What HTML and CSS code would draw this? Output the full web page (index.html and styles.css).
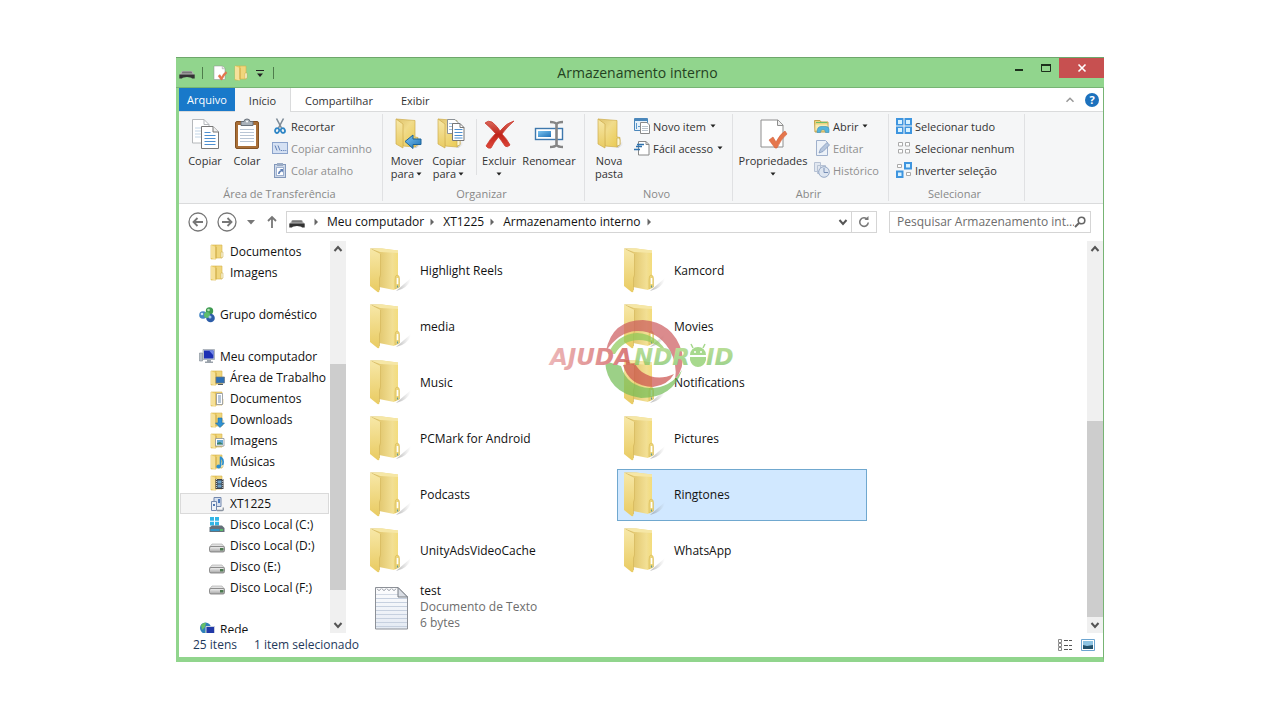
FILE: index.html
```html
<!DOCTYPE html>
<html lang="pt-BR">
<head>
<meta charset="utf-8">
<title>Armazenamento interno</title>
<link rel="stylesheet" href="styles.css">
</head>
<body>
<svg class="defs" width="0" height="0" aria-hidden="true">
  <defs>
    <linearGradient id="gFront" x1="0" y1="0" x2="0" y2="1"><stop offset="0" stop-color="#f7e8a8"/><stop offset="1" stop-color="#e9cb62"/></linearGradient>
    <linearGradient id="gBack" x1="0" y1="0" x2="1" y2="1"><stop offset="0" stop-color="#dcc06a"/><stop offset=".4" stop-color="#f1dc8c"/><stop offset="1" stop-color="#e9c84a"/></linearGradient>
    <linearGradient id="gInner" x1="0" y1="0" x2="1" y2="0"><stop offset="0" stop-color="#c9ac57"/><stop offset=".35" stop-color="#e3c971"/><stop offset=".8" stop-color="#f2df94"/><stop offset="1" stop-color="#f3dc7c"/></linearGradient>
    <linearGradient id="gShade" x1="0" y1="0" x2="1" y2="0"><stop offset="0" stop-color="#777" stop-opacity=".55"/><stop offset="1" stop-color="#999" stop-opacity="0"/></linearGradient>
    <linearGradient id="gBlue" x1="0" y1="0" x2="1" y2="1"><stop offset="0" stop-color="#7cc4f0"/><stop offset="1" stop-color="#1f72b8"/></linearGradient>
    <linearGradient id="gRed" x1="0" y1="0" x2="0" y2="1"><stop offset="0" stop-color="#d9695c"/><stop offset=".5" stop-color="#c0241a"/><stop offset="1" stop-color="#e0493c"/></linearGradient>
    <linearGradient id="gSheet" x1="0" y1="0" x2="0" y2="1"><stop offset="0" stop-color="#fdfdfe"/><stop offset="1" stop-color="#e4eaf3"/></linearGradient>
    <linearGradient id="gDisk" x1="0" y1="0" x2="0" y2="1"><stop offset="0" stop-color="#f2f2f2"/><stop offset="1" stop-color="#a5a5a5"/></linearGradient>
    <linearGradient id="gMarkRed" x1="0" y1="0" x2="1" y2="0"><stop offset="0" stop-color="#e59a9c"/><stop offset="1" stop-color="#c9403f"/></linearGradient>
    <linearGradient id="gMarkGreen" x1="0" y1="0" x2="0" y2="1"><stop offset="0" stop-color="#a3d36c"/><stop offset="1" stop-color="#6fbd5a"/></linearGradient>
  </defs>

  <symbol id="folder-lg" viewBox="0 0 48 48">
    <path d="M30 44 L45 31 Q44 38 36 42 Z" fill="url(#gShade)"/>
    <path d="M4 1.500 L16 1.500 L32 3.500 V40 L28 43 L13 40 L13 8 Z" fill="url(#gInner)"/>
    <path d="M4 1.500 L16 1.500 L32 3.500 V6 L14 5 Z" fill="#f6e7a6"/>
    <path d="M29 33 q0-5 2-5 q2.500 0 2.500 4 v8 l-4.500 2z" fill="#ecd47a" stroke="#d8bb55" stroke-width=".6"/>
    <path d="M31.500 31v6" stroke="#fff" stroke-width="1.600"/><path d="M31.500 38.500v2" stroke="#5b9c9c" stroke-width="1.200"/>
    <path d="M4 1.500 L14.500 7 V28 L13.500 31 V43 Q13.500 46 11.500 45 L4 39 Z" fill="url(#gFront)"/>
    <path d="M14.500 7 V28 L13.500 31 V43" fill="none" stroke="#d4b65a" stroke-width=".7"/>
  </symbol>
  <symbol id="folder-md" viewBox="0 0 32 32">
    <path d="M23 29 L30 23 V27 L25 30 Z" fill="url(#gShade)"/>
    <path d="M5 1 L24 2.500 V19 L27 19.500 V26 L24 29 L12 28 L11 6 Z" fill="url(#gBack)" stroke="#cfae4d" stroke-width=".7"/>
    <path d="M24 20 q3-1 3 2 v5 l-3 1z" fill="#fdf7d5" stroke="#c9ae55" stroke-width=".7"/>
    <path d="M5 1 L12 6 V30 L5 26 Z" fill="url(#gFront)" stroke="#cfae4d" stroke-width=".7"/>
  </symbol>
  <symbol id="folder-sm" viewBox="0 0 16 16">
    <path d="M2 1 H7 V15 H2 Z" fill="#eed06d" stroke="#d9b64c" stroke-width=".6"/>
    <path d="M7 1 H13 V14 H7 Z" fill="#f0d67c" stroke="#d6b34a" stroke-width=".6"/>
    <path d="M2 1 L6.500 3 V15.500 L2 14 Z" fill="#f6e19a"/>
    <path d="M7 3v11" stroke="#c9a541" stroke-width=".8"/>
    <path d="M12 8 h2 v5 l-2 1z" fill="#fdf6d8" stroke="#c5a94f" stroke-width=".5"/>
  </symbol>
  <symbol id="phone" viewBox="0 0 16 16">
    <path d="M3 6 H13 L15.500 10 H.500 Z" fill="#b5b5b5"/><path d="M3.500 6.500 h9 l1 2 h-11z" fill="#777"/>
    <path d="M.300 9.500 H15.700 V13.500 H13 Q12 12 8 12 T3 13.500 H.300 Z" fill="#333"/>
  </symbol>
  <symbol id="properties" viewBox="0 0 32 32">
    <path d="M4 2 H21 L26 7 V29 H4 Z" fill="#fff" stroke="#8e8e8e"/><path d="M20.500 2 V7.500 H26" fill="#eee" stroke="#8e8e8e"/>
    <path d="M12 22 L16 19 L19 24 Q23 16 28 13 L30 16 Q24 21 20 30 L18 30 Z" fill="#e5764c" stroke="#d2603a" stroke-width=".6"/>
  </symbol>
  <symbol id="copy" viewBox="0 0 32 32">
    <g fill="#fff" stroke="#b5b8bb"><path d="M3.500 1.500 H15 L20 6.500 V25 H3.500 Z"/><path d="M15 1.500 V6.500 H20" fill="none"/></g>
    <path d="M6 10h6M6 13h6M6 16h6M6 19h6" stroke="#c2d5e6"/>
    <path d="M12.500 8.500 H24 L29.500 14 V30.500 H12.500 Z" fill="#fff" stroke="#777"/><path d="M24 8.500 V14 H29.500" fill="#eee" stroke="#777"/>
    <path d="M15.500 14.500h6M15.500 17.500h11M15.500 20.500h11M15.500 23.500h11M15.500 26.500h11" stroke="#4d8fd0"/>
  </symbol>
  <symbol id="paste" viewBox="0 0 32 32">
    <rect x="4.500" y="3.500" width="23" height="27" rx="1.500" fill="#a96f37" stroke="#825224"/><path d="M7 7h18v21H7z" fill="#fff"/>
    <path d="M9 11.500h14M9 14.500h14M9 17.500h14M9 20.500h14M9 23.500h14" stroke="#b9c6d5"/>
    <path d="M10 3.500 h3 q0-2.500 3-2.500 t3 2.500 h3 v4 H10z" fill="#aab2ba" stroke="#69717a"/><circle cx="16" cy="3.500" r="1" fill="#fff"/>
  </symbol>
  <symbol id="cut" viewBox="0 0 16 16">
    <path d="M4.500 .500 L9.500 10M11.500 .500 L6.500 10" stroke="#7e8b97" stroke-width="1.600"/>
    <g fill="none" stroke="#2f86c6" stroke-width="1.800"><ellipse cx="5.300" cy="12.500" rx="2" ry="2.400" transform="rotate(20 5 12)"/><ellipse cx="10.700" cy="12.500" rx="2" ry="2.400" transform="rotate(-20 11 12)"/></g>
  </symbol>
  <symbol id="path" viewBox="0 0 16 16">
    <rect x=".500" y="2.500" width="15" height="11" fill="#d5e1f3" stroke="#8ba3cb"/><path d="M3 5.500l2 5M6 5.500l2 5" stroke="#5f7fb5"/><path d="M9 10.500h1.200M11.200 10.500h1.200M13.300 10.500h1" stroke="#5f7fb5"/>
  </symbol>
  <symbol id="shortcut" viewBox="0 0 16 16">
    <rect x="2.500" y="2.500" width="11" height="13" fill="#cdd8e8" stroke="#8298bb"/><rect x="5" y="1" width="6" height="3" fill="#9aabc5"/><rect x="4.500" y="5.500" width="7" height="8" fill="#fff" stroke="#9eb1d0"/>
    <path d="M6 12 q0-3 3-4 l-1.500-1 h3.500 v3.500 l-1-1.200 q-2 .7-2.500 2.700z" fill="#6080b5"/>
  </symbol>
  <symbol id="move-to" viewBox="0 0 32 32">
    <use href="#folder-md"/><path d="M14 23.500 L22 17 V21 H30 V26.500 H22 V30.500 Z" fill="url(#gBlue)" stroke="#1c6399"/>
  </symbol>
  <symbol id="copy-to" viewBox="0 0 32 32">
    <use href="#folder-md"/>
    <path d="M14.500 1.500 H22 L25 4.500 V15.500 H14.500Z" fill="#fff" stroke="#8d9297"/><path d="M16 5.500h6M16 8.500h5M16 11.500h5" stroke="#9fbddb"/>
    <path d="M19.500 5.500 H27 L31 9.500 V22.500 H19.500Z" fill="#fff" stroke="#777"/><path d="M27 5.500V9.500H31" fill="none" stroke="#777"/><path d="M21.500 11.500h8M21.500 14.500h8M21.500 17.500h8M21.500 20h8" stroke="#4d8fd0"/>
  </symbol>
  <symbol id="delete" viewBox="0 0 32 32">
    <path d="M2 5 Q5 2 9 4 Q15 9 17 13 Q23 5 31 3 Q23 10 19 16 Q24 21 27 27 Q24 30 22 28 Q18 22 15.500 19 Q11 24 8 30 Q5 31 3 28 Q7 21 12.500 15.500 Q8 10 2 5Z" fill="url(#gRed)" stroke="#cb3a2e" stroke-width=".8"/>
  </symbol>
  <symbol id="rename" viewBox="0 0 32 32">
    <rect x="2.500" y="10.500" width="27" height="11" fill="#fff" stroke="#3e78ad" stroke-width="1.400"/><rect x="5" y="13" width="13" height="6" fill="url(#gBlue)"/>
    <path d="M17 4 Q22 4 23.500 6 Q25 4 30 4M23.500 6V27M17 29 Q22 29 23.500 27 Q25 29 30 29" fill="none" stroke="#858585" stroke-width="2.600"/>
  </symbol>
  <symbol id="new-item" viewBox="0 0 16 16">
    <path d="M.500 .500h13v12H.500z" fill="#e7f1fa" stroke="#4b87bb"/><path d="M1 2h12" stroke="#4b87bb" stroke-width="2"/><path d="M2.500 5v6M4 8.500h2" stroke="#5d9acb"/>
    <path d="M6.500 4.500H13l2.500 2.500V15.500H6.500Z" fill="#fff" stroke="#8a8a8a"/><path d="M8 8.500h6M8 10.500h6M8 12.500h6" stroke="#b9c3cc"/>
  </symbol>
  <symbol id="easy" viewBox="0 0 16 16">
    <path d="M4.500 1.500H12l3 3V15H4.500Z" fill="#fff" stroke="#888"/><path d="M12 1.500v3h3" fill="none" stroke="#888"/><path d="M3 4.500h7M2 6.500h6M0 9.500h6" stroke="#2f72ad" stroke-width="1.300"/>
  </symbol>
  <symbol id="open" viewBox="0 0 16 16">
    <path d="M.500 2.500H6l1 1.500h7v10H1Z" fill="#ecd481" stroke="#c3a24a"/><path d="M2 4.500h11" stroke="#6ebf6a"/><path d="M1.500 6.500h12v3l-12 3z" fill="#f8ecb4"/><path d="M3 14.500 q0-6 4-6 h5 q3 0 3 3 v3 H11.500 q0-3-2.500-3 t-2.500 3Z" fill="#54b4dc" stroke="#3a8fb8" stroke-width=".6"/>
  </symbol>
  <symbol id="edit" viewBox="0 0 16 16">
    <path d="M2.500 .500h9l2 2v13h-11z" fill="#edf2f8" stroke="#9fb0cc"/><path d="M5 13l1.500-4L13 2.500l2.500 2.500L9 11.500Z" fill="#b6c6dd" stroke="#8399bd" stroke-width=".8"/>
  </symbol>
  <symbol id="history" viewBox="0 0 16 16">
    <path d="M.500 .500h6v9h-6zM3.500 3.500h8v8h-8z" fill="#e1e7f0" stroke="#b7c2d4"/><circle cx="10" cy="10" r="5.300" fill="#dde5f0" stroke="#96a9c6"/><path d="M10 6v4.500h4" fill="none" stroke="#788fb5"/>
  </symbol>
  <symbol id="sel-all" viewBox="0 0 16 16">
    <path d="M0 0h7.500v7.500H0zM8.500 0H16v7.500H8.500zM0 8.500h7.500V16H0zM8.500 8.500H16V16H8.500z" fill="#3e95df"/><path d="M2 2h4v4H2zM10 2h4v4h-4zM2 10h4v4H2zM10 10h4v4h-4z" fill="#d8f2ff"/>
  </symbol>
  <symbol id="sel-none" viewBox="0 0 16 16">
    <path d="M2.500 2.500h4v3.500h-4zM9.500 2.500h4v3.500h-4zM2.500 9.500h4v3.500h-4zM9.500 9.500h4v3.500h-4z" fill="#fff" stroke="#aaa"/>
  </symbol>
  <symbol id="sel-inv" viewBox="0 0 16 16">
    <path d="M1.500 2.500h4v3h-4zM10.500 10.500h4v3h-4z" fill="#fff" stroke="#aaa"/><path d="M8 0h8v7.500H8zM0 8.500h7.500V16H0z" fill="#3e95df"/><path d="M10 2h4v3.500h-4zM2 10.500h3.500V14H2z" fill="#d8f2ff"/>
  </symbol>
  <symbol id="homegroup" viewBox="0 0 16 16">
    <circle cx="10.500" cy="4" r="3.700" fill="#3e9a51"/><circle cx="4" cy="8" r="3.800" fill="#4586c4"/><circle cx="11.500" cy="11" r="4.300" fill="#2d5da8"/><circle cx="8" cy="8" r="3" fill="#5ebd6c"/><circle cx="9.500" cy="3" r="1.300" fill="#b5e5b5"/><circle cx="3" cy="7" r="1.300" fill="#cfe5f8"/><circle cx="11" cy="10" r="1.500" fill="#9fc5ee"/>
  </symbol>
  <symbol id="computer" viewBox="0 0 16 16">
    <path d="M.500 4h3v8h-3z" fill="#b9c1c9" stroke="#7f8a94" stroke-width=".6"/><path d="M4 .500h11.500v10H4z" fill="#ccd2da" stroke="#8b94a0" stroke-width=".6"/><path d="M5 1.500h9.500v8H5z" fill="#1d2fb4"/><path d="M10 1.500h4.500v5z" fill="#7186e6"/><path d="M8 11h4v1.500h2V14H6v-1.500h2z" fill="#9aa2ab"/>
  </symbol>
  <symbol id="f-desktop" viewBox="0 0 16 16"><use href="#folder-sm"/><path d="M7 7h8.500v6H7z" fill="#2d6fb4" stroke="#69747f" stroke-width=".7"/><path d="M9 14.500h5" stroke="#4c5a66"/></symbol>
  <symbol id="f-docs" viewBox="0 0 16 16"><use href="#folder-sm"/><path d="M7.500 2.500h6v11h-6z" fill="#fff" stroke="#8d9299" stroke-width=".8"/><path d="M9 5h3M9 7h3M9 9h3M9 11h3" stroke="#6d8bad"/></symbol>
  <symbol id="f-down" viewBox="0 0 16 16"><use href="#folder-sm"/><path d="M9 6h4v5h2.500L11 15.500 6.500 11H9z" fill="#2f91d3" stroke="#1d6da5" stroke-width=".6"/></symbol>
  <symbol id="f-pics" viewBox="0 0 16 16"><use href="#folder-sm"/><path d="M6.500 5.500h8.500v7.500H6.500z" fill="#fff" stroke="#8d9299" stroke-width=".8"/><path d="M8 7h6v4.500H8z" fill="#66a9d3"/><path d="M8 10l3-1 3 2v.500H8z" fill="#3c7f66"/></symbol>
  <symbol id="f-music" viewBox="0 0 16 16"><use href="#folder-sm"/><path d="M11.500 2.500 V12 M11.500 3 q4 3 2 8" fill="none" stroke="#2b8fd0" stroke-width="1.600"/><ellipse cx="9.700" cy="12.500" rx="2.300" ry="1.900" fill="#2b8fd0"/></symbol>
  <symbol id="f-video" viewBox="0 0 16 16"><use href="#folder-sm"/><path d="M6.500 4h8v10h-8z" fill="#3d434b"/><path d="M8.500 5.500h4v3h-4zM8.500 9.500h4v3h-4z" fill="#6aa0c8"/><path d="M7.500 4v10M13.700 4v10" stroke="#eee" stroke-width=".8" stroke-dasharray="1 1"/></symbol>
  <symbol id="device" viewBox="0 0 16 16"><path d="M5 1.500h7v9H5z" fill="#d8e1ef" stroke="#7489ae"/><path d="M2.500 5.500h5v9h-5z" fill="#eef2f8" stroke="#7489ae"/><path d="M9 3h2v4H9z" fill="#4c79bf"/><path d="M4 8h2v2H4z" fill="#5177b1"/><path d="M8 14.500h5q2 0 1-3" fill="none" stroke="#8a93a0" stroke-width="1.300"/></symbol>
  <symbol id="disk" viewBox="0 0 16 16"><path d="M3 6h10l2.500 3H.500z" fill="#e2e2e2" stroke="#a5a5a5" stroke-width=".6"/><rect x=".500" y="8.500" width="15" height="5.500" rx="1.500" fill="url(#gDisk)" stroke="#777" stroke-width=".8"/><path d="M11 10h3.500v2.500H11z" fill="#4c7a50"/></symbol>
  <symbol id="disk-c" viewBox="0 0 16 16"><path d="M1 0h4v3.800H1zM6 0h4v3.800H6zM1 4.800h4v3.800H1zM6 4.800h4v3.800H6z" fill="#31b5e6"/><path d="M1 10l2-1.500h10L15.500 11v4H.500V10z" fill="#65707a"/><path d="M1.500 12h9v2h-9z" fill="#2e93c4"/><path d="M11 12h3v2h-3z" fill="#58b96b"/></symbol>
  <symbol id="network" viewBox="0 0 16 16"><circle cx="6.500" cy="6" r="5.500" fill="#2f80b9"/><path d="M2 3q3-3 5-2l-1 4-3 3zM6 9l4-2v3l-3 2z" fill="#67bf67"/><path d="M7 4.500h8.500v8H7z" fill="#2139a8" stroke="#c9d0de"/><path d="M9 15.500h5" stroke="#8d95a0"/></symbol>
  <symbol id="text-file" viewBox="0 0 48 48">
    <path d="M9.500 4.500H32L41.500 14V46H9.500Z" fill="url(#gSheet)" stroke="#8c9097"/>
    <path d="M10 15.500h31M10 19.500h31M10 23.500h31M10 27.500h31M10 31.500h31M10 35.500h31M10 39.500h31M10 43.500h31" stroke="#c6d0df"/>
    <path d="M10 11.500h22" stroke="#d3dae5"/><path d="M11 5.500q2 4 4 0M16 5.500q2 4 4 0M21 5.500q2 4 4 0M26 5.500q2 4 4 0" fill="none" stroke="#a4a9b1"/>
    <path d="M32 4.500V14H41.500Z" fill="#d9dde4" stroke="#777c84"/>
  </symbol>
  <symbol id="up" viewBox="0 0 16 16"><path d="M4.500 10L8 6l3.500 4" fill="none" stroke="#555" stroke-width="2"/></symbol>
  <symbol id="down" viewBox="0 0 16 16"><path d="M4.500 6L8 10l3.500-4" fill="none" stroke="#555" stroke-width="2"/></symbol>
  <symbol id="tri" viewBox="0 0 8 8"><path d="M2.500 .500L6 4L2.500 7.500Z" fill="#666"/></symbol>
  <symbol id="caret" viewBox="0 0 8 8"><path d="M1.500 2.500h5L4 5.500Z" fill="#222"/></symbol>
</svg>

<main class="window">
  <header class="titlebar">
    <div class="quick">
      <svg class="i16"><use href="#phone"/></svg><i class="qsep"></i>
      <button class="plain" aria-label="Propriedades"><svg class="i16"><use href="#properties"/></svg></button>
      <button class="plain" aria-label="Nova pasta"><svg class="i16"><use href="#folder-sm"/></svg></button>
      <button class="plain custom" aria-label="Personalizar"><svg width="8" height="8" viewBox="0 0 8 8"><path d="M0 1.500h8" stroke="#222"/><path d="M1 4.500h6L4 8Z" fill="#222"/></svg></button><i class="qsep"></i>
    </div>
    <h1>Armazenamento interno</h1>
    <div class="controls">
      <button class="ctl" aria-label="Minimizar"><svg width="10" height="10" viewBox="0 0 10 10"><path d="M1 7h8" stroke="#1d301c" stroke-width="2"/></svg></button>
      <button class="ctl" aria-label="Maximizar"><svg width="10" height="10" viewBox="0 0 10 10"><path d="M.500 2v6.500h9V2" fill="none" stroke="#1d301c"/><path d="M0 2h10" stroke="#1d301c" stroke-width="2"/></svg></button>
      <button class="ctl close" aria-label="Fechar"><svg width="10" height="10" viewBox="0 0 10 10"><path d="M1.500 1.500l7 7M8.500 1.500l-7 7" stroke="#fff" stroke-width="1.600"/></svg></button>
    </div>
  </header>

  <nav class="tabs">
    <button class="tab file">Arquivo</button><button class="tab active">Início</button><button class="tab">Compartilhar</button><button class="tab">Exibir</button>
    <div class="tabs-end">
      <button class="plain" aria-label="Recolher faixa"><svg width="14" height="14" viewBox="0 0 16 16"><path d="M4 10l4-4 4 4" fill="none" stroke="#999" stroke-width="1.800"/></svg></button>
      <button class="help" aria-label="Ajuda">?</button>
    </div>
  </nav>

  <section class="ribbon">
    <div class="group g-clip">
      <div class="tools">
        <button class="big w42"><svg class="i32"><use href="#copy"/></svg>Copiar</button>
        <button class="big w42"><svg class="i32"><use href="#paste"/></svg>Colar</button>
        <div class="stack">
          <button class="small"><svg class="i16"><use href="#cut"/></svg>Recortar</button>
          <button class="small" disabled><svg class="i16"><use href="#path"/></svg>Copiar caminho</button>
          <button class="small" disabled><svg class="i16"><use href="#shortcut"/></svg>Colar atalho</button>
        </div>
      </div>
      <h2>Área de Transferência</h2>
    </div>
    <div class="group g-org">
      <div class="tools">
        <button class="big w42"><svg class="i32"><use href="#move-to"/></svg>Mover<span>para<svg class="i8"><use href="#caret"/></svg></span></button>
        <button class="big w42"><svg class="i32"><use href="#copy-to"/></svg>Copiar<span>para<svg class="i8"><use href="#caret"/></svg></span></button>
        <i class="inner"></i>
        <button class="big w42"><svg class="i32"><use href="#delete"/></svg>Excluir<span><svg class="i8"><use href="#caret"/></svg></span></button>
        <button class="big w58"><svg class="i32"><use href="#rename"/></svg>Renomear</button>
      </div>
      <h2>Organizar</h2>
    </div>
    <div class="group g-new">
      <div class="tools">
        <button class="big w42"><svg class="i32"><use href="#folder-md"/></svg>Nova<span>pasta</span></button>
        <div class="stack">
          <button class="small"><svg class="i16"><use href="#new-item"/></svg>Novo item<svg class="i8"><use href="#caret"/></svg></button>
          <button class="small"><svg class="i16"><use href="#easy"/></svg>Fácil acesso<svg class="i8"><use href="#caret"/></svg></button>
        </div>
      </div>
      <h2>Novo</h2>
    </div>
    <div class="group g-open">
      <div class="tools">
        <button class="big w74"><svg class="i32"><use href="#properties"/></svg>Propriedades<span><svg class="i8"><use href="#caret"/></svg></span></button>
        <div class="stack">
          <button class="small"><svg class="i16"><use href="#open"/></svg>Abrir<svg class="i8"><use href="#caret"/></svg></button>
          <button class="small" disabled><svg class="i16"><use href="#edit"/></svg>Editar</button>
          <button class="small" disabled><svg class="i16"><use href="#history"/></svg>Histórico</button>
        </div>
      </div>
      <h2>Abrir</h2>
    </div>
    <div class="group g-sel">
      <div class="tools">
        <div class="stack">
          <button class="small"><svg class="i16"><use href="#sel-all"/></svg>Selecionar tudo</button>
          <button class="small"><svg class="i16"><use href="#sel-none"/></svg>Selecionar nenhum</button>
          <button class="small"><svg class="i16"><use href="#sel-inv"/></svg>Inverter seleção</button>
        </div>
      </div>
      <h2>Selecionar</h2>
    </div>
  </section>

  <section class="location">
    <button class="plain" aria-label="Voltar"><svg width="20" height="20" viewBox="0 0 20 20" fill="none" stroke="#777"><circle cx="10" cy="10" r="9" stroke-width="1.300"/><path d="M15 10H6M9.500 6L5.500 10l4 4" stroke-width="1.800"/></svg></button>
    <button class="plain" aria-label="Avançar"><svg width="20" height="20" viewBox="0 0 20 20" fill="none" stroke="#777"><circle cx="10" cy="10" r="9" stroke-width="1.300"/><path d="M5 10h9M10.500 6l4 4-4 4" stroke-width="1.800"/></svg></button>
    <button class="plain" aria-label="Recentes"><svg width="10" height="8" viewBox="0 0 10 8"><path d="M1 2h8L5 6.500Z" fill="#777"/></svg></button>
    <button class="plain" aria-label="Acima"><svg width="14" height="16" viewBox="0 0 14 16"><path d="M7 14V3M3 7l4-4 4 4" fill="none" stroke="#777" stroke-width="1.800"/></svg></button>
    <div class="address">
      <svg class="i16"><use href="#phone"/></svg><svg class="i8"><use href="#tri"/></svg>
      <a href="#">Meu computador</a><svg class="i8"><use href="#tri"/></svg>
      <a href="#">XT1225</a><svg class="i8"><use href="#tri"/></svg>
      <a href="#">Armazenamento interno</a><svg class="i8"><use href="#tri"/></svg>
      <button class="plain drop" aria-label="Histórico de endereços"><svg class="i16"><use href="#down"/></svg></button>
      <button class="plain reload" aria-label="Atualizar"><svg class="i16" viewBox="0 0 16 16"><path d="M11.500 5.500A4.300 4.300 0 1 0 12.300 8.500" fill="none" stroke="#777" stroke-width="1.600"/><path d="M8.500 6h4V2Z" fill="#777"/></svg></button>
    </div>
    <div class="search">
      <input type="text" aria-label="Pesquisar" placeholder="Pesquisar Armazenamento int...">
      <svg width="12" height="12" viewBox="0 0 12 12" fill="none" stroke="#666"><circle cx="7.500" cy="4.500" r="3.300" stroke-width="1.600"/><path d="M5 7L1 11" stroke-width="2"/></svg>
    </div>
  </section>

  <section class="body">
    <div class="tree-pane">
      <nav class="tree">
        <a href="#" class="node sub"><svg class="i16"><use href="#folder-sm"/></svg>Documentos</a>
        <a href="#" class="node sub last"><svg class="i16"><use href="#folder-sm"/></svg>Imagens</a>
        <a href="#" class="node last"><svg class="i16"><use href="#homegroup"/></svg>Grupo doméstico</a>
        <a href="#" class="node"><svg class="i16"><use href="#computer"/></svg>Meu computador</a>
        <a href="#" class="node sub"><svg class="i16"><use href="#f-desktop"/></svg>Área de Trabalho</a>
        <a href="#" class="node sub"><svg class="i16"><use href="#f-docs"/></svg>Documentos</a>
        <a href="#" class="node sub"><svg class="i16"><use href="#f-down"/></svg>Downloads</a>
        <a href="#" class="node sub"><svg class="i16"><use href="#f-pics"/></svg>Imagens</a>
        <a href="#" class="node sub"><svg class="i16"><use href="#f-music"/></svg>Músicas</a>
        <a href="#" class="node sub"><svg class="i16"><use href="#f-video"/></svg>Vídeos</a>
        <a href="#" class="node sub current"><svg class="i16"><use href="#device"/></svg>XT1225</a>
        <a href="#" class="node sub"><svg class="i16"><use href="#disk-c"/></svg>Disco Local (C:)</a>
        <a href="#" class="node sub"><svg class="i16"><use href="#disk"/></svg>Disco Local (D:)</a>
        <a href="#" class="node sub"><svg class="i16"><use href="#disk"/></svg>Disco (E:)</a>
        <a href="#" class="node sub last"><svg class="i16"><use href="#disk"/></svg>Disco Local (F:)</a>
        <a href="#" class="node"><svg class="i16"><use href="#network"/></svg>Rede</a>
      </nav>
      <div class="scroll tree-scroll"><svg class="i16"><use href="#up"/></svg><i class="before"></i><i class="thumb"></i><i class="after"></i><svg class="i16"><use href="#down"/></svg></div>
    </div>
    <div class="files">
      <a href="#" class="item"><svg class="i48"><use href="#folder-lg"/></svg><span>Highlight Reels</span></a>
      <a href="#" class="item"><svg class="i48"><use href="#folder-lg"/></svg><span>Kamcord</span></a>
      <a href="#" class="item"><svg class="i48"><use href="#folder-lg"/></svg><span>media</span></a>
      <a href="#" class="item"><svg class="i48"><use href="#folder-lg"/></svg><span>Movies</span></a>
      <a href="#" class="item"><svg class="i48"><use href="#folder-lg"/></svg><span>Music</span></a>
      <a href="#" class="item"><svg class="i48"><use href="#folder-lg"/></svg><span>Notifications</span></a>
      <a href="#" class="item"><svg class="i48"><use href="#folder-lg"/></svg><span>PCMark for Android</span></a>
      <a href="#" class="item"><svg class="i48"><use href="#folder-lg"/></svg><span>Pictures</span></a>
      <a href="#" class="item"><svg class="i48"><use href="#folder-lg"/></svg><span>Podcasts</span></a>
      <a href="#" class="item selected"><svg class="i48"><use href="#folder-lg"/></svg><span>Ringtones</span></a>
      <a href="#" class="item"><svg class="i48"><use href="#folder-lg"/></svg><span>UnityAdsVideoCache</span></a>
      <a href="#" class="item"><svg class="i48"><use href="#folder-lg"/></svg><span>WhatsApp</span></a>
      <a href="#" class="item"><svg class="i48"><use href="#text-file"/></svg><span>test<small>Documento de Texto</small><small>6 bytes</small></span></a>
      <svg class="mark" width="190" height="82" viewBox="0 0 190 82">
        <path d="M59 33 Q65 2 96 2 Q126 4 135 34 Q138 50 128 62 Q131 46 122 31 Q110 12 89 13 Q72 14 59 33Z" fill="#cc5b5e"/>
        <path d="M61 36 Q70 16 90 15 Q111 16 122 38 Q108 22 92 22 Q76 22 68 36 Z" fill="#8cc958"/>
        <path d="M58 43 Q60 75 94 80 Q126 80 135 52 Q124 70 103 70 Q80 69 74 48 Z" fill="#73bd55"/>
        <path d="M76 47 Q82 68 106 69 Q121 67 127 56 Q110 64 95 54 Q89 49 88 45Z" fill="#cb4f4b"/>
        <g class="mark-text">
          <text x="3" y="47" fill="url(#gMarkRed)">AJUDA</text>
          <text x="87" y="47" fill="url(#gMarkGreen)">NDR</text>
          <text x="159" y="47" fill="url(#gMarkGreen)">ID</text>
        </g>
        <path d="M143 37 a8 8 0 0 1 16 0z M143 39h16 v3 q-2 7-8 7 t-8-7z" fill="#82c95d"/><path d="M146 30l-2-4M156 30l2-4" stroke="#82c95d" stroke-width="1.500"/><circle cx="148" cy="34" r="1" fill="#fff"/><circle cx="154" cy="34" r="1" fill="#fff"/>
      </svg>
    </div>
    <div class="scroll file-scroll"><svg class="i16"><use href="#up"/></svg><i class="before"></i><i class="thumb"></i><svg class="i16"><use href="#down"/></svg></div>
  </section>

  <footer class="status">
    <span>25 itens</span><span>1 item selecionado</span>
    <div class="views">
      <button class="plain" aria-label="Detalhes"><svg class="i16" viewBox="0 0 16 16"><path d="M1.500 2.500h3v3h-3zM1.500 6.500h3v3h-3zM1.500 10.500h3v3h-3z" fill="#fff" stroke="#888"/><path d="M7 3.500h4M12 3.500h3M7 8.500h4M12 8.500h3M7 12.500h4M12 12.500h3" stroke="#555"/></svg></button>
      <button class="plain" aria-label="Ícones"><svg class="i16" viewBox="0 0 16 16"><path d="M1.500 2.500h13v11h-13z" fill="#fff" stroke="#6da5d0"/><path d="M3 4h10v8H3z" fill="#8cc3e2"/><path d="M3 8l4 1 6-1v4H3z" fill="#22516b"/></svg></button>
    </div>
  </footer>
</main>
</body>
</html>
```

FILE: styles.css
```css
* { box-sizing: border-box; }
body {
  margin: 0;
  height: 100vh;
  padding: 57px 176px 58px;
  background: #fff;
  display: flex;
  font: 12px/16px "Open Sans", "Noto Sans", sans-serif;
  color: #111;
}
.defs { position: absolute; }
button { font: inherit; color: inherit; background: none; border: 0; padding: 0; }
a { color: inherit; text-decoration: none; }
h1, h2 { margin: 0; font-weight: 400; }
svg { flex: none; display: block; }
.i8 { width: 8px; height: 8px; }
.i16 { width: 16px; height: 16px; }
.i32 { width: 32px; height: 32px; }
.i48 { width: 48px; height: 48px; }
.plain { display: flex; align-items: center; justify-content: center; }

.window {
  flex: 1;
  min-width: 0;
  display: flex;
  flex-direction: column;
  background: #fff;
  border: solid #91d58d;
  border-width: 0 1px 5px 3px;
  border-right-color: #77b474;
}

.titlebar {
  height: 31px;
  flex: none;
  margin: 0 -1px 0 -3px;
  background: #91d58d;
  border-top: 1px solid #6ea76b;
  border-bottom: 1px solid #77b474;
  display: grid;
  grid-template-columns: 1fr auto 1fr;
}
.titlebar h1 { font-size: 14px; line-height: 29px; padding-right: 5px; color: #24421f; }
.quick { display: flex; align-items: center; gap: 5px; padding-left: 3px; }
.qsep { width: 1px; height: 12px; background: #4f7d4c; margin: 0 4px 0 2px; }
.custom { width: 12px; }
.controls { display: flex; justify-content: flex-end; }
.ctl { width: 27px; height: 20px; display: flex; align-items: center; justify-content: center; }
.close { width: 45px; background: #c75050; }

.tabs { height: 24px; flex: none; display: flex; font-size: 11px; border-bottom: 1px solid #dadbdc; color: #333; }
.tab { height: 24px; min-width: 56px; padding: 1px 14px 0; }
.file { background: #1979ca; color: #fff; padding: 0; height: 23px; }
.active { background: #f5f6f7; border-right: 1px solid #dadbdc; padding: 1px 0 0; }
.tabs-end { margin-left: auto; display: flex; align-items: center; gap: 8px; padding-right: 4px; }
.help { width: 14px; height: 14px; border-radius: 50%; background: #1c71bd; color: #fff; font-weight: 700; line-height: 14px; }

.ribbon { height: 92px; flex: none; padding: 2px 0; background: #f5f6f7; border-bottom: 1px solid #dadbdc; display: flex; font-size: 11px; line-height: 13px; color: #333; }
.group { display: flex; flex-direction: column; border-right: 1px solid #e0e1e3; padding: 1px 0 0 3px; }
.group h2 { font-size: 11px; line-height: 14px; text-align: center; margin: 0 4px 0 -3px; color: #888; }
.tools { display: flex; height: 72px; }
.g-clip { width: 204px; padding-left: 5px; }
.g-org { width: 202px; }
.g-new { width: 148px; }
.g-open { width: 156px; }
.g-sel { width: 136px; padding-left: 7px; }
.g-sel h2 { margin-left: -7px; }
.big { display: flex; flex-direction: column; align-items: center; padding-top: 3px; white-space: nowrap; }
.big .i32 { margin-bottom: 4px; }
.big span { display: flex; align-items: center; gap: 1px; min-height: 13px; }
.w42 { width: 42px; }
.w58 { width: 58px; }
.w74 { width: 74px; }
.inner { width: 1px; height: 56px; background: #dfe0e2; margin: 4px 1px 0 6px; }
.stack { margin-left: 4px; }
.g-sel .stack { margin-left: 0; }
.small { display: flex; align-items: center; gap: 3px; height: 22px; white-space: nowrap; }
.small:disabled { color: #8f8f8f; }

.location { height: 37px; flex: none; display: flex; align-items: center; gap: 9px; padding: 0 12px 2px 9px; }
.address { flex: 1; height: 22px; margin-left: -2px; border: 1px solid #d5d5d5; display: flex; align-items: center; gap: 7px; padding-left: 2px; white-space: nowrap; }
.address a { margin-right: -3px; }
.drop { margin-left: auto; }
.reload { width: 25px; height: 20px; margin-left: -7px; border-left: 1px solid #d5d5d5; }
.search { width: 202px; height: 22px; margin-left: 3px; border: 1px solid #d5d5d5; display: flex; align-items: center; padding: 0 4px 0 7px; }
.search input { flex: 1; min-width: 0; border: 0; padding: 0; font: inherit; outline: none; }
.search input::placeholder { color: #6d6d6d; }

.body { flex: 1; min-height: 0; display: flex; }
.tree-pane { width: 168px; flex: none; display: flex; }
.tree { flex: 1; min-width: 0; overflow: hidden; padding-left: 1px; }
.node { display: flex; align-items: center; gap: 5px; height: 21px; padding-left: 18px; border: 1px solid transparent; white-space: nowrap; }
.sub { padding-left: 28px; }
.last { margin-bottom: 21px; }
.current { background: #f5f5f5; border-color: #dadada; }
.scroll { width: 16px; flex: none; display: flex; flex-direction: column; background: #f0f0f0; }
.thumb { background: #cdcdcd; }
.tree-scroll .before { flex: 106; }
.tree-scroll .thumb { flex: 225; }
.tree-scroll .after { flex: 27; }
.tree-scroll { margin: 0 1px; }
.file-scroll .before { flex: 163; }
.file-scroll .thumb { flex: 195; }

.files { position: relative; flex: 1; min-width: 0; overflow: hidden; display: grid; grid-template-columns: repeat(auto-fill, 250px); grid-auto-rows: 52px; gap: 4px; padding: 4px 0 0 16px; }
.item { display: flex; align-items: center; gap: 6px; padding-left: 2px; border: 1px solid transparent; }
.item small { display: block; font-size: 12px; color: #6d6d6d; }
.selected { background: #d1e8ff; border-color: #70a8cf; }
.mark { position: absolute; left: 200px; top: 77px; opacity: .7; pointer-events: none; }
.mark-text { font: italic 700 23px "DejaVu Sans", sans-serif; }

.status { height: 24px; flex: none; display: flex; align-items: center; gap: 17px; padding: 0 7px 0 14px; color: #1e395b; }
.views { margin-left: auto; display: flex; gap: 7px; }
```
